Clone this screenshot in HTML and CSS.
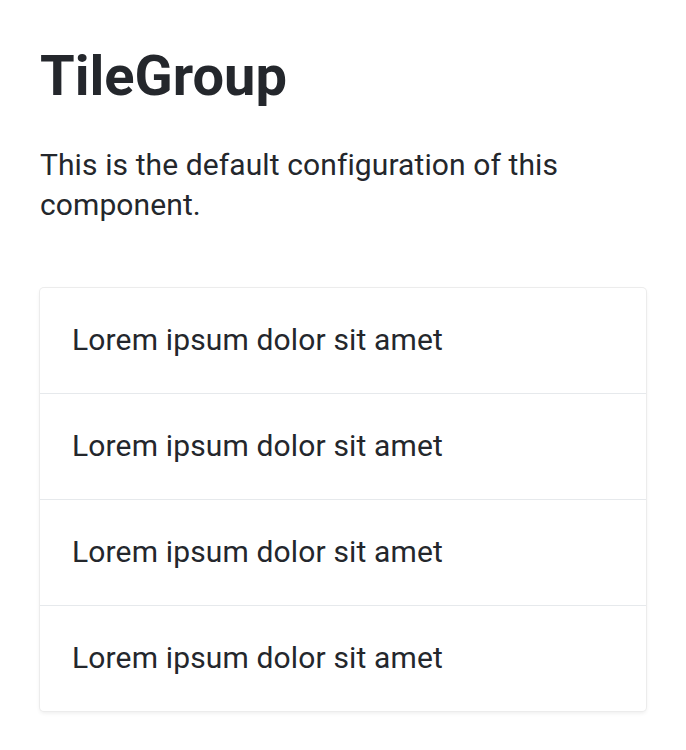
FILE: index.html
```html
<!DOCTYPE html>
<html>
<head>
<meta charset="utf-8">
<link rel="stylesheet" href="styles.css">
</head>
<body>
<main class="page">
  <h1 class="title">TileGroup</h1>
  <p class="desc">This is the default configuration of this component.</p>
  <div class="group">
    <div class="tile">Lorem ipsum dolor sit amet</div>
    <div class="tile">Lorem ipsum dolor sit amet</div>
    <div class="tile">Lorem ipsum dolor sit amet</div>
    <div class="tile">Lorem ipsum dolor sit amet</div>
  </div>
</main>
</body>
</html>
```

FILE: styles.css
```css
html, body {
  margin: 0;
  padding: 0;
  background: #ffffff;
}
body {
  font-family: Roboto, "Liberation Sans", sans-serif;
  color: #24272c;
}
.page {
  padding: 40px 40px;
}
.title {
  margin: 0;
  font-size: 56px;
  line-height: 72px;
  font-weight: 700;
  color: #24272c;
}
.desc {
  margin: 33px 0 0 0;
  font-size: 30px;
  line-height: 40px;
  letter-spacing: 0.1px;
  max-width: 560px;
}
.group {
  margin-top: 63px;
  width: 606px;
  border-radius: 4px;
  background: #fff;
  box-shadow: 0 0 0 1px #ececec, 0 2px 4px rgba(0,0,0,0.08);
}
.tile {
  height: 105px;
  box-sizing: border-box;
  display: flex;
  align-items: center;
  padding: 0 32px 2px 32px;
  font-size: 30px;
  letter-spacing: 0.15px;
  border-top: 1px solid #e6e9ec;
}
.tile + .tile {
  height: 106px;
}
.tile:first-child {
  border-top: none;
}
```
